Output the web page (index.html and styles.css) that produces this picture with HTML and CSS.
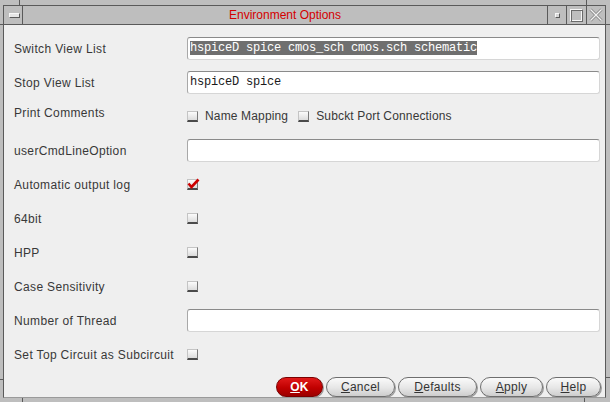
FILE: index.html
```html
<!DOCTYPE html>
<html>
<head>
<meta charset="utf-8">
<title>Environment Options</title>
<link rel="stylesheet" href="styles.css">
</head>
<body>
<div class="frame">
  <span class="tick tick-top-l"></span>
  <span class="tick tick-top-r"></span>
  <span class="tick tick-side tick-l1"></span>
  <span class="tick tick-side tick-r1"></span>
  <span class="tick tick-side tick-l2"></span>
  <span class="tick tick-side tick-r2"></span>
  <span class="tick tick-bot-l"></span>
  <span class="tick tick-bot-r"></span>
  <div class="window">
    <div class="titlebar">
      <div class="tb-cell tb-menu"><span class="menu-icon"></span></div>
      <div class="tb-title">Environment Options</div>
      <div class="tb-cell tb-min"><span class="min-icon"></span></div>
      <div class="tb-cell tb-max"><span class="max-icon"></span></div>
      <div class="tb-cell tb-close">
        <svg width="14" height="14" viewBox="0 0 14 14">
          <path d="M1.5 1.5 L12.5 12.5 M12.5 1.5 L1.5 12.5" stroke="#8a8a8a" stroke-width="3" fill="none"/>
          <path d="M1.5 1.5 L12.5 12.5 M12.5 1.5 L1.5 12.5" stroke="#f2f2f2" stroke-width="1.2" fill="none"/>
        </svg>
      </div>
    </div>
    <div class="content">
      <div class="form">
        <div class="row">
          <div class="label">Switch View List</div>
          <div class="field"><div class="input"><span class="sel">hspiceD spice cmos_sch cmos.sch schematic</span></div></div>
        </div>
        <div class="row">
          <div class="label">Stop View List</div>
          <div class="field"><div class="input">hspiceD spice</div></div>
        </div>
        <div class="row">
          <div class="label label-raised">Print Comments</div>
          <div class="field checks">
            <span class="check-item"><span class="cb"></span>Name Mapping</span>
            <span class="check-item"><span class="cb"></span>Subckt Port Connections</span>
          </div>
        </div>
        <div class="row">
          <div class="label">userCmdLineOption</div>
          <div class="field"><div class="input"></div></div>
        </div>
        <div class="row">
          <div class="label">Automatic output log</div>
          <div class="field">
            <span class="cb cb-checked">
              <svg width="13" height="11" viewBox="0 0 13 11"><path d="M1.5 5.5 L4.5 9 L11.5 1.5" stroke="#cc0000" stroke-width="2.6" fill="none" stroke-linejoin="miter"/></svg>
            </span>
          </div>
        </div>
        <div class="row">
          <div class="label">64bit</div>
          <div class="field"><span class="cb"></span></div>
        </div>
        <div class="row">
          <div class="label">HPP</div>
          <div class="field"><span class="cb"></span></div>
        </div>
        <div class="row">
          <div class="label">Case Sensitivity</div>
          <div class="field"><span class="cb"></span></div>
        </div>
        <div class="row">
          <div class="label">Number of Thread</div>
          <div class="field"><div class="input"></div></div>
        </div>
        <div class="row">
          <div class="label">Set Top Circuit as Subcircuit</div>
          <div class="field"><span class="cb"></span></div>
        </div>
      </div>
      <div class="buttons">
        <button class="btn btn-ok"><u>O</u>K</button>
        <button class="btn btn-cancel"><u>C</u>ancel</button>
        <button class="btn btn-defaults"><u>D</u>efaults</button>
        <button class="btn btn-apply"><u>A</u>pply</button>
        <button class="btn btn-help"><u>H</u>elp</button>
      </div>
    </div>
  </div>
</div>
</body>
</html>
```
FILE: styles.css
```css
* { box-sizing: border-box; }
html, body { margin: 0; padding: 0; }
body {
  width: 610px;
  height: 402px;
  overflow: hidden;
  background: #bebebe;
  font-family: "Liberation Sans", Arial, sans-serif;
}
.frame {
  position: relative;
  width: 610px;
  height: 402px;
  padding: 5px 4px 4px 3px;
  background: #bebebe;
}
.tick { position: absolute; background: #5a5a5a; }
.tick-top-l { left: 19px; top: 0; width: 1px; height: 5px; }
.tick-top-r { left: 586px; top: 0; width: 1px; height: 5px; }
.tick-side { height: 1px; }
.tick-l1 { left: 0; top: 24px; width: 3px; }
.tick-r1 { right: 0; top: 24px; width: 4px; }
.tick-l2 { left: 0; top: 379px; width: 3px; }
.tick-r2 { right: 0; top: 377px; width: 4px; }
.tick-bot-l { left: 22px; bottom: 0; width: 1px; height: 4px; }
.tick-bot-r { left: 584px; bottom: 0; width: 1px; height: 4px; }

.window {
  height: 100%;
  display: flex;
  flex-direction: column;
  border: 1px solid #5a5a5a;
  border-bottom-color: #9a9a9a;
  background: #efefef;
}
.titlebar {
  height: 19px;
  flex: none;
  display: flex;
  background: #bebebe;
  border-bottom: 1px solid #5a5a5a;
}
.tb-cell {
  flex: none;
  display: flex;
  align-items: center;
  justify-content: center;
  height: 18px;
}
.tb-menu { width: 19px; border-right: 1px solid #5a5a5a; }
.menu-icon {
  width: 11px;
  height: 5px;
  background: #e6e6e6;
  border: 1px solid #f8f8f8;
  border-right-color: #5a5a5a;
  border-bottom-color: #5a5a5a;
  margin-left: 2px;
}
.tb-title {
  flex: 1;
  text-align: center;
  color: #d40000;
  font-size: 12px;
  line-height: 18px;
}
.tb-min { width: 19px; border-left: 1px solid #5a5a5a; }
.min-icon {
  width: 5px;
  height: 5px;
  background: #d8d8d8;
  border: 1px solid #f8f8f8;
  border-right-color: #5a5a5a;
  border-bottom-color: #5a5a5a;
}
.tb-max { width: 20px; border-left: 1px solid #5a5a5a; }
.max-icon {
  width: 13px;
  height: 13px;
  border: 1px solid #f6f6f6;
  border-right-color: #6a6a6a;
  border-bottom-color: #6a6a6a;
  box-shadow: inset 1px 1px 0 #6a6a6a, inset -1px -1px 0 #f6f6f6;
}
.tb-close { width: 19px; border-left: 1px solid #5a5a5a; }

.content {
  flex: 1;
  display: flex;
  flex-direction: column;
  padding: 6px 2px 0 10px;
}
.form { display: flex; flex-direction: column; }
.row {
  height: 34px;
  display: flex;
  align-items: center;
}
.label {
  width: 173px;
  flex: none;
  font-size: 12px;
  letter-spacing: 0.35px;
  color: #383838;
  padding-top: 2px;
}
.label-raised { margin-bottom: 6px; padding-top: 0; }
.field {
  flex: 1;
  display: flex;
  align-items: center;
  padding-right: 3px;
}
.input {
  width: 100%;
  height: 23px;
  background: #ffffff;
  border: 1px solid #d6d6d6;
  border-top-color: #8a8a8a;
  border-left-color: #a8a8a8;
  border-radius: 3px;
  padding: 4px 0 0 2px;
  font-family: "Liberation Mono", "Courier New", monospace;
  font-size: 12px;
  letter-spacing: -0.2px;
  line-height: 13px;
  color: #1a1a1a;
  white-space: nowrap;
}
.sel {
  background: #6f6f6f;
  color: #ffffff;
}
.checks { gap: 10px; }
.check-item {
  display: flex;
  align-items: center;
  gap: 7px;
  font-size: 12px;
  letter-spacing: 0.15px;
  color: #383838;
}
.cb {
  width: 11px;
  height: 11px;
  flex: none;
  display: inline-block;
  position: relative;
  background: linear-gradient(#fbfbfb, #dcdcdc);
  border: 1px solid #c4c4c4;
  border-right-color: #7a7a7a;
  border-bottom: 2px solid #4a4a4a;
}
.cb-checked svg {
  position: absolute;
  left: -1px;
  top: -2px;
}
.buttons {
  display: flex;
  justify-content: flex-end;
  gap: 3px;
  margin-top: 6px;
  padding-right: 2px;
}
.btn {
  height: 20px;
  padding: 0;
  border: 1px solid #6e6e6e;
  border-radius: 10px;
  background: linear-gradient(#fafafa, #e6e6e6 55%, #cdcdcd);
  font-family: "Liberation Sans", Arial, sans-serif;
  font-size: 12px;
  letter-spacing: 0.3px;
  color: #333;
  line-height: 18px;
  box-shadow: 1px 1px 0 #9a9a9a;
}
.btn u { text-decoration-thickness: 1px; text-underline-offset: 1px; }
.btn-ok {
  width: 47px;
  background: linear-gradient(#e01a1a, #c00000 55%, #9c0000);
  border-color: #7a0000;
  color: #ffffff;
  font-weight: bold;
}
.btn-cancel { width: 69px; }
.btn-defaults { width: 79px; }
.btn-apply { width: 63px; }
.btn-help { width: 55px; }
```
